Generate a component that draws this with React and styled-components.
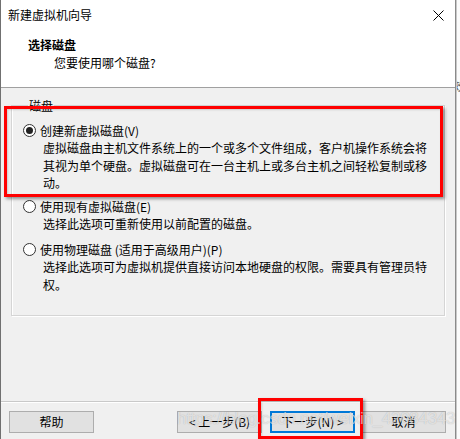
import React from "react";
import styled, { createGlobalStyle } from "styled-components";

const Global = createGlobalStyle`
  html, body { margin: 0; padding: 0; }
  body {
    width: 460px; height: 439px; overflow: hidden; background: #fff;
    font-family: "Noto Sans CJK SC", "Microsoft YaHei", sans-serif;
    font-size: 12px; color: #000;
  }
`;

const Screen = styled.div`
  position: relative;
  display: flex;
  width: 460px;
  height: 439px;
  overflow: hidden;
`;

const Win = styled.div`
  width: 456px;
  height: 439px;
  box-sizing: border-box;
  border-left: 1px solid #707070;
  border-right: 1px solid #8a8a8a;
  background: #f0f0f0;
  display: flex;
  flex-direction: column;
`;

const Outside = styled.div`
  flex: 1;
  background: #fbfbfb;
  overflow: hidden;
  border-left: 1px solid #c8c8c8;
`;

const OutsideGlyph = styled.div`
  margin-top: 77px;
  margin-left: -4px;
  font-size: 12px;
  color: #555;
  line-height: 17px;
`;

const TitleBar = styled.div`
  height: 30px;
  background: #fff;
  display: flex;
  align-items: center;
  justify-content: space-between;
  padding: 0 11px 0 7px;
  line-height: 30px;
`;

const Header = styled.div`
  background: #fff;
  border-bottom: 1px solid #a0a0a0;
  padding-top: 6px;
  height: 51px;
`;

const HeadTitle = styled.div`
  padding-left: 27px;
  font-weight: bold;
  line-height: 17px;
`;

const HeadSub = styled.div`
  padding-left: 53px;
  margin-top: 1px;
  line-height: 17px;
`;

const Content = styled.div`
  flex: 1;
  padding: 9px 10px 0 10px;
`;

const Group = styled.fieldset`
  margin: 0;
  padding: 8px 0 22px 11px;
  border: 1px solid #d5d5d5;
  box-shadow: inset 1px 1px 0 #fff, 1px 1px 0 #fff;
`;

const Legend = styled.legend`
  margin-left: 5px;
  padding: 0 1px;
  line-height: 17px;
`;

const Option = styled.div`
  margin-top: ${(p) => p.$gap}px;
`;

const RadioRow = styled.div`
  display: flex;
  align-items: center;
  gap: 4px;
  line-height: 17px;
`;

const Radio = styled.span`
  width: 13px;
  height: 13px;
  box-sizing: border-box;
  border-radius: 50%;
  border: 1px solid #333;
  background: #fff;
  display: flex;
  align-items: center;
  justify-content: center;
  &::after {
    content: "";
    width: 7px;
    height: 7px;
    border-radius: 50%;
    background: ${(p) => (p.$checked ? "#222" : "transparent")};
  }
`;

const Desc = styled.div`
  margin-left: 20px;
  width: 386px;
  line-height: 17.5px;
  color: #000;
`;

const Footer = styled.div`
  border-top: 1px solid #c9c9c9;
  box-shadow: inset 0 1px 0 #fff;
  height: 38px;
  padding: 9px 8px 0 8px;
  box-sizing: border-box;
  display: flex;
  align-items: flex-start;
`;

const Btn = styled.button`
  width: ${(p) => p.$w || 85}px;
  height: 22px;
  margin-left: ${(p) => p.$ml || 0}px;
  box-sizing: border-box;
  background: #e1e1e1;
  border: 1px solid ${(p) => (p.$def ? "#0078d7" : "#adadad")};
  box-shadow: ${(p) => (p.$def ? "inset 0 0 0 1px #0078d7" : "none")};
  font-family: "Noto Sans CJK SC", sans-serif;
  font-size: 12px;
  color: #000;
  padding: 0;
  line-height: 20px;
`;

const RedBox = styled.div`
  position: absolute;
  left: ${(p) => p.$x}px;
  top: ${(p) => p.$y}px;
  width: ${(p) => p.$w}px;
  height: ${(p) => p.$h}px;
  box-sizing: border-box;
  border: 3px solid #ff0000;
  box-shadow: 2px 2px 3px rgba(0, 0, 0, 0.4), inset 1px 1px 2px rgba(0, 0, 0, 0.15);
  pointer-events: none;
`;

const Watermark = styled.div`
  position: absolute;
  left: 177px;
  top: 409px;
  font-family: "Liberation Sans", Arial, sans-serif;
  font-size: 17px;
  letter-spacing: -0.3px;
  color: rgba(255, 255, 255, 0.6);
  text-shadow: 0 0 1px rgba(0, 0, 0, 0.25);
  pointer-events: none;
  white-space: nowrap;
`;

const CloseIcon = () => (
  <svg width="11" height="11" viewBox="0 0 11 11">
    <path d="M0.5 0.5 L10.5 10.5 M10.5 0.5 L0.5 10.5" stroke="#000" strokeWidth="1" fill="none" />
  </svg>
);

export default function App() {
  return (
    <>
      <Global />
      <Screen>
        <Win>
          <TitleBar>
            <span>新建虚拟机向导</span>
            <CloseIcon />
          </TitleBar>
          <Header>
            <HeadTitle>选择磁盘</HeadTitle>
            <HeadSub>您要使用哪个磁盘?</HeadSub>
          </Header>
          <Content>
            <Group>
              <Legend>磁盘</Legend>
              <Option $gap={0}>
                <RadioRow>
                  <Radio $checked />
                  <span>创建新虚拟磁盘(V)</span>
                </RadioRow>
                <Desc>
                  虚拟磁盘由主机文件系统上的一个或多个文件组成，客户机操作系统会将其视为单个硬盘。虚拟磁盘可在一台主机上或多台主机之间轻松复制或移动。
                </Desc>
              </Option>
              <Option $gap={6}>
                <RadioRow>
                  <Radio />
                  <span>使用现有虚拟磁盘(E)</span>
                </RadioRow>
                <Desc>选择此选项可重新使用以前配置的磁盘。</Desc>
              </Option>
              <Option $gap={9}>
                <RadioRow>
                  <Radio />
                  <span>使用物理磁盘 (适用于高级用户)(P)</span>
                </RadioRow>
                <Desc>
                  选择此选项可为虚拟机提供直接访问本地硬盘的权限。需要具有管理员特权。
                </Desc>
              </Option>
            </Group>
          </Content>
          <Footer>
            <Btn>帮助</Btn>
            <Btn $ml={83}>&lt; 上一步(B)</Btn>
            <Btn $ml={8} $def>下一步(N) &gt;</Btn>
            <Btn $ml={6}>取消</Btn>
          </Footer>
        </Win>
        <Outside>
          <OutsideGlyph>效</OutsideGlyph>
        </Outside>
        <RedBox $x={4} $y={106} $w={439} $h={91} />
        <RedBox $x={258} $y={398} $w={105} $h={41} />
        <Watermark>https://blog.csdn.net/weixin_42084343</Watermark>
      </Screen>
    </>
  );
}
